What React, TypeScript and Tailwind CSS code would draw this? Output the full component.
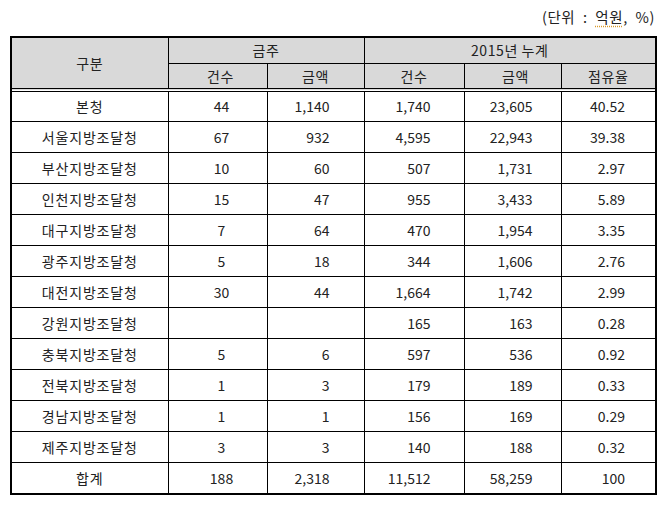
import React from "react";

type Row = { name: string; a: string; b: string; c: string; d: string; e: string };

const rows: Row[] = [
  { name: "본청", a: "44", b: "1,140", c: "1,740", d: "23,605", e: "40.52" },
  { name: "서울지방조달청", a: "67", b: "932", c: "4,595", d: "22,943", e: "39.38" },
  { name: "부산지방조달청", a: "10", b: "60", c: "507", d: "1,731", e: "2.97" },
  { name: "인천지방조달청", a: "15", b: "47", c: "955", d: "3,433", e: "5.89" },
  { name: "대구지방조달청", a: "7", b: "64", c: "470", d: "1,954", e: "3.35" },
  { name: "광주지방조달청", a: "5", b: "18", c: "344", d: "1,606", e: "2.76" },
  { name: "대전지방조달청", a: "30", b: "44", c: "1,664", d: "1,742", e: "2.99" },
  { name: "강원지방조달청", a: "", b: "", c: "165", d: "163", e: "0.28" },
  { name: "충북지방조달청", a: "5", b: "6", c: "597", d: "536", e: "0.92" },
  { name: "전북지방조달청", a: "1", b: "3", c: "179", d: "189", e: "0.33" },
  { name: "경남지방조달청", a: "1", b: "1", c: "156", d: "169", e: "0.29" },
  { name: "제주지방조달청", a: "3", b: "3", c: "140", d: "188", e: "0.32" },
  { name: "합계", a: "188", b: "2,318", c: "11,512", d: "58,259", e: "100" },
];

export default function App() {
  return (
    <div
      className="w-[666px] h-[505px] bg-white text-[#222] text-[14px] leading-[18px]"
      style={{ fontFamily: '"Noto Sans CJK KR", "Noto Sans", sans-serif' }}
    >
      <div className="h-[36px] pt-[8px] pr-[11px] text-right tracking-[0.6px] text-[14.5px]">
        (단위&nbsp; :&nbsp; <span className="underline decoration-dotted decoration-[#d99a2b] underline-offset-[3px]">억원</span>,&nbsp; %)
      </div>
      <div className="ml-[10px] w-[647px] border-2 border-black">
        <table className="w-full table-fixed border-collapse">
          <colgroup>
            <col className="w-[156px]" />
            <col className="w-[99px]" />
            <col className="w-[97px]" />
            <col className="w-[100px]" />
            <col className="w-[97px]" />
            <col className="w-[94px]" />
          </colgroup>
          <thead className="bg-[#d9d9d9] tracking-[0.6px]">
            <tr className="h-[25px]">
              <th rowSpan={2} className="font-normal border-r border-b-4 border-double border-b-black border-r-black p-0 align-middle">
                구분
              </th>
              <th colSpan={2} className="font-normal border-r border-b border-black p-0 align-middle">
                금주
              </th>
              <th colSpan={3} className="font-normal border-b border-black p-0 align-middle">
                2015년 누계
              </th>
            </tr>
            <tr className="h-[27px]">
              <th className="font-normal border-r border-r-black border-b-4 border-double border-b-black p-0 pl-[6px] align-middle">건수</th>
              <th className="font-normal border-r border-r-black border-b-4 border-double border-b-black p-0 align-middle">금액</th>
              <th className="font-normal border-r border-r-black border-b-4 border-double border-b-black p-0 align-middle">건수</th>
              <th className="font-normal border-r border-r-black border-b-4 border-double border-b-black p-0 pl-[6px] align-middle">금액</th>
              <th className="font-normal border-b-4 border-double border-b-black p-0 align-middle">점유율</th>
            </tr>
          </thead>
          <tbody>
            {rows.map((r, i) => {
              const last = i === rows.length - 1;
              const bb = last ? "border-b-0" : "border-b border-b-black";
              return (
                <tr key={r.name} className="h-[31px]">
                  <td className={`p-0 text-center align-middle tracking-[0.8px] border-r border-r-black ${bb}`}>{r.name}</td>
                  <td className={`p-0 pl-[8px] text-center align-middle border-r border-r-black ${bb}`}>{r.a}</td>
                  <td className={`p-0 pr-[34px] text-right align-middle border-r border-r-black ${bb}`}>{r.b}</td>
                  <td className={`p-0 pr-[33px] text-right align-middle border-r border-r-black ${bb}`}>{r.c}</td>
                  <td className={`p-0 pr-[28px] text-right align-middle border-r border-r-black ${bb}`}>{r.d}</td>
                  <td className={`p-0 pr-[30px] text-right align-middle ${bb}`}>{r.e}</td>
                </tr>
              );
            })}
          </tbody>
        </table>
      </div>
    </div>
  );
}
